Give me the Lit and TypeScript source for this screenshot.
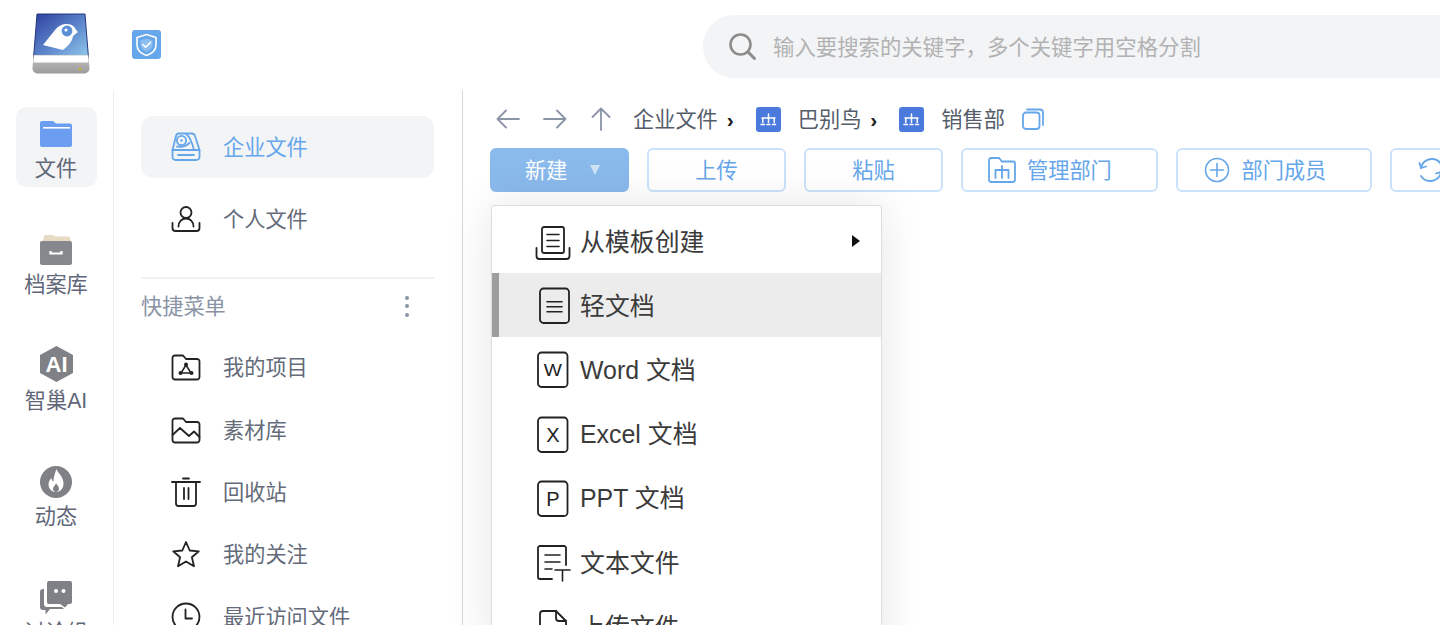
import { LitElement, html, css, svg } from "lit";
import { customElement } from "lit/decorators.js";

const ico = (w: number, h: number, body: unknown, cls = "") =>
  html`<svg class="ico ${cls}" width=${w} height=${h} viewBox="0 0 ${w} ${h}">${body}</svg>`;

const line = `fill:none;stroke:currentColor;stroke-width:1.8;stroke-linecap:round;stroke-linejoin:round`;

const logo = html`<svg class="logo" width="60" height="64" viewBox="0 0 60 64">
  <defs>
    <linearGradient id="lg" x1="0" y1="0" x2="1" y2="1">
      <stop offset="0" stop-color="#2c3f9e" />
      <stop offset="0.55" stop-color="#5f88cd" />
      <stop offset="1" stop-color="#93cdec" />
    </linearGradient>
    <linearGradient id="lb" x1="0" y1="0" x2="0" y2="1">
      <stop offset="0" stop-color="#c4c4c4" />
      <stop offset="1" stop-color="#9b9b9b" />
    </linearGradient>
  </defs>
  <path d="M7 2H55L58.5 46H3.5Z" fill="url(#lg)" stroke="#26367f" stroke-width="1" />
  <path d="M3.5 43H58.5L59.5 56A5 5 0 0 1 54.5 61.5H7.5A5 5 0 0 1 2.5 56Z" fill="url(#lb)" />
  <path d="M4 43.5H58L58.5 50.5H3.5Z" fill="#fff" />
  <circle cx="50" cy="57" r="1.6" fill="#c7b04a" />
  <path d="M13 33L25 18C29 13 33 12 37 12C42 12 45 15 46 18L48 20L43 24C42 30 38 34 33 38Z" fill="#fff" />
  <circle cx="37" cy="19" r="5.4" fill="#5b8fd6" />
  <circle cx="36" cy="18" r="1.6" fill="#fff" />
</svg>`;

const shield = html`<svg class="shield" width="29" height="29" viewBox="0 0 29 29">
  <rect width="29" height="29" rx="3" fill="#66a6ea" />
  <path d="M14.5 4.5L24 7.5V15C24 20 20 23.5 14.5 25.5C9 23.5 5 20 5 15V7.5Z" fill="none" stroke="#fff" stroke-width="1.6" stroke-linejoin="round" />
  <path d="M14.5 8.5L20.5 10.4V15C20.5 18 18 20.3 14.5 21.7C11 20.3 8.5 18 8.5 15V10.4Z" fill="#8cbdf0" />
  <path d="M10.8 14.5L13.6 17.2L18.4 12.4" fill="none" stroke="#fff" stroke-width="1.6" stroke-linecap="round" stroke-linejoin="round" />
</svg>`;

const railIcons = {
  folder: ico(32, 36, svg`
    <path d="M2 7H13L16 9.5H30A2 2 0 0 1 32 11.5V31A2 2 0 0 1 30 33H2A2 2 0 0 1 0 31V9A2 2 0 0 1 2 7Z" fill="#6b9df0" />
    <rect x="3" y="13" width="27" height="1.6" fill="#fff" />`),
  archive: ico(32, 36, svg`
    <path d="M3 10L4 6C4.3 5 5 5 6 5H13L15 6.5H28C29 6.5 29.6 7 29.8 8L31 12H1Z" fill="#e7dcc3" />
    <rect x="0" y="11" width="32" height="24" rx="2" fill="#87888d" />
    <path d="M10.5 21V23.5H21.5V21" fill="none" stroke="#fff" stroke-width="2.2" />`),
  ai: ico(32, 36, svg`
    <path d="M16.5 0L33 9V27L16.5 36L0 27V9Z" fill="#808186" />
    <text x="16.5" y="26" text-anchor="middle" class="ai-t">AI</text>`),
  fire: ico(32, 36, svg`
    <circle cx="16" cy="20" r="16" fill="#808186" />
    <path d="M16.5 7C17.5 11 23.5 14 23.5 21.5C23.5 27 20 30 16 30C12 30 8.5 27 8.5 22.5C8.5 19.5 10 17.5 11.5 16C11.5 18 12.5 19 13.5 19.5C13.5 15 15 11 16.5 7Z" fill="#fff" />
    <path d="M16 21C16.5 23 19 24 19 26.5C19 28.5 17.5 30 16 30C14.5 30 13 28.5 13 26.5C13 24.5 15.5 23.5 16 21Z" fill="#808186" />`),
  chat: ico(32, 36, svg`
    <path d="M9 3H30A2 2 0 0 1 32 5V24A2 2 0 0 1 30 26H28L25 29.5L20 26H9A2 2 0 0 1 7 24V5A2 2 0 0 1 9 3Z" fill="#808186" />
    <path d="M4 11V26A3 3 0 0 0 7 29H22L24 31H10L5.5 36.5V32H3A3 3 0 0 1 0 29V14A3 3 0 0 1 3 11Z" fill="#808186" />
    <circle cx="16" cy="13" r="2" fill="#fff" />
    <circle cx="23.5" cy="13" r="2" fill="#fff" />`),
};

const navIcons = {
  drive: ico(30, 30, svg`<g style=${line}>
    <path d="M7.5 1.5H21Q23.2 1.5 24 4L28.5 18V25A3 3 0 0 1 25.5 28H4.5A3 3 0 0 1 1.5 25V18L5 4Q5.6 1.5 7.5 1.5Z" />
    <path d="M1.5 18H28.5M7 23H23" />
    <circle cx="10.5" cy="8.5" r="4.6" />
    <path d="M15 2C19.5 5 21.5 12 23 18M6 14.5C11 15.5 15.5 14 18.5 11" /></g>
    <circle cx="10.5" cy="8.5" r="1.2" fill="currentColor" />`),
  person: ico(30, 30, svg`<g style=${line}>
    <circle cx="15" cy="8.5" r="5.5" />
    <path d="M7.5 22.5C7.5 17.5 11 14.5 15 14.5C19 14.5 22.5 17.5 22.5 22.5" />
    <path d="M1.5 19V24A3 3 0 0 0 4.5 27H25.5A3 3 0 0 0 28.5 24V19" /></g>`),
  project: ico(30, 30, svg`<g style=${line}>
    <path d="M4 3.5H12L15 7H26A2.5 2.5 0 0 1 28.5 9.5V25A2.5 2.5 0 0 1 26 27.5H4A2.5 2.5 0 0 1 1.5 25V6A2.5 2.5 0 0 1 4 3.5Z" />
    <path d="M15 13L10 21H20Z" style="stroke-width:1.5" /></g>
    <circle cx="15" cy="12.5" r="2" fill="currentColor" />
    <circle cx="9.5" cy="21" r="2" fill="currentColor" />
    <circle cx="20.5" cy="21" r="2" fill="currentColor" />`),
  image: ico(30, 30, svg`<g style=${line}>
    <path d="M4 3.5H12L15 7H26A2.5 2.5 0 0 1 28.5 9.5V25A2.5 2.5 0 0 1 26 27.5H4A2.5 2.5 0 0 1 1.5 25V6A2.5 2.5 0 0 1 4 3.5Z" />
    <path d="M1.5 20L9 13L18 21L23 16.5L28.5 22" /></g>`),
  trash: ico(30, 30, svg`<g style=${line}>
    <path d="M1 5H29M12 1.5H18" />
    <path d="M5 5V26.5A2.5 2.5 0 0 0 7.5 29H22.5A2.5 2.5 0 0 0 25 26.5V5" />
    <path d="M13 11V22M17.5 11V22" /></g>`),
  star: ico(30, 30, svg`<path d="M15 3L18.7 11.5L27.8 12.3L20.9 18.3L23 27.3L15 22.5L7 27.3L9.1 18.3L2.2 12.3L11.3 11.5Z" style=${line} />`),
  clock: ico(30, 30, svg`<g style=${line}>
    <circle cx="15" cy="15" r="13.5" />
    <path d="M14.5 7.5V16.5H21" /></g>`),
};

const menuIcons = {
  template: ico(36, 40, svg`<g style=${line}>
    <rect x="7" y="6" width="22" height="26" rx="2" />
    <path d="M12 13.5H24M12 19.5H24M12 25.5H24" style="stroke-width:1.6" />
    <path d="M1.5 27V35A3 3 0 0 0 4.5 38H31.5A3 3 0 0 0 34.5 35V27" /></g>`),
  lite: ico(36, 40, svg`<g style=${line}>
    <rect x="5" y="3.5" width="29" height="34.5" rx="3.5" />
    <path d="M12 16.7H27M12 21.7H27M12 26.7H27" style="stroke-width:1.6" /></g>`),
  word: ico(36, 40, svg`<rect x="3" y="3.5" width="29.5" height="34.5" rx="3.5" style=${line} />
    <text transform="translate(17.8 27) scale(1.2 1)" text-anchor="middle" class="doc-t w">W</text>`),
  excel: ico(36, 40, svg`<rect x="3" y="3.5" width="29.5" height="34.5" rx="3.5" style=${line} />
    <text x="17.8" y="27.5" text-anchor="middle" class="doc-t">X</text>`),
  ppt: ico(36, 40, svg`<rect x="3" y="3.5" width="29.5" height="34.5" rx="3.5" style=${line} />
    <text x="17.8" y="27.5" text-anchor="middle" class="doc-t">P</text>`),
  text: ico(36, 40, svg`<g style=${line}>
    <path d="M31 23V6A2 2 0 0 0 29 4H5A2 2 0 0 0 3 6V35A2 2 0 0 0 5 37H17" />
    <path d="M10 13H25M10 20H25M10 27H17M20 28H35M27.5 28V39" style="stroke-width:1.6" /></g>`),
  upload: ico(36, 40, svg`<g style=${line}>
    <path d="M5 40V8A3 3 0 0 1 8 5H21L31 15V40" />
    <path d="M21 5V12A3 3 0 0 0 24 15H31" /></g>`),
};

const navArrow = (d: string, cls = "") =>
  ico(24, 24, svg`<path d=${d} style="fill:none;stroke:currentColor;stroke-width:1.8;stroke-linecap:round;stroke-linejoin:round" />`, `arrow ${cls}`);

const orgBadge = html`<svg class="org" width="25" height="25" viewBox="0 0 25 25">
  <rect width="25" height="25" rx="3" fill="#4a7bdc" />
  <path d="M12.5 7V10.5M6 11H19M6.8 11V15.5M12.5 11V15.5M18.2 11V15.5" fill="none" stroke="#fff" stroke-width="1.5" stroke-linecap="round" />
  <path d="M5 17.5H8.5M11 17.5H14M16.5 17.5H19.5" fill="none" stroke="#fff" stroke-width="1.5" stroke-linecap="round" />
</svg>`;

const rail = [
  { icon: railIcons.folder, label: "文件", active: true },
  { icon: railIcons.archive, label: "档案库" },
  { icon: railIcons.ai, label: "智巢AI" },
  { icon: railIcons.fire, label: "动态" },
  { icon: railIcons.chat, label: "讨论组" },
];

const shortcuts = [
  { icon: navIcons.project, label: "我的项目" },
  { icon: navIcons.image, label: "素材库" },
  { icon: navIcons.trash, label: "回收站" },
  { icon: navIcons.star, label: "我的关注" },
  { icon: navIcons.clock, label: "最近访问文件" },
];

const menu = [
  { icon: menuIcons.template, label: "从模板创建", more: true },
  { icon: menuIcons.lite, label: "轻文档", hover: true },
  { icon: menuIcons.word, label: "Word 文档" },
  { icon: menuIcons.excel, label: "Excel 文档" },
  { icon: menuIcons.ppt, label: "PPT 文档" },
  { icon: menuIcons.text, label: "文本文件" },
  { icon: menuIcons.upload, label: "上传文件" },
];

@customElement("app-root")
export class AppRoot extends LitElement {
  static styles = css`
    :host {
      display: flex;
      flex-direction: column;
      width: 1440px;
      height: 625px;
      overflow: hidden;
      background: #fff;
      font-family: "Liberation Sans", "Noto Sans CJK SC", sans-serif;
      font-size: 21.2px;
    }
    .ico {
      display: block;
      flex: none;
      overflow: visible;
    }
    .txt {
      padding-bottom: 3px;
      white-space: nowrap;
    }
    .header {
      display: flex;
      align-items: center;
      flex: none;
      height: 90px;
      padding-left: 30px;
      box-sizing: border-box;
    }
    .logo {
      flex: none;
      margin-bottom: 2px;
    }
    .shield {
      flex: none;
      margin-left: 42px;
      margin-bottom: 1px;
    }
    .search {
      display: flex;
      align-items: center;
      gap: 17px;
      width: 737px;
      height: 63px;
      margin-left: auto;
      margin-top: 3px;
      padding-left: 26px;
      box-sizing: border-box;
      border-radius: 31px 0 0 31px;
      background: #f3f4f6;
      color: #b2b2b2;
      font-size: 21.4px;
    }
    .search .txt {
      padding-bottom: 2px;
    }
    .body {
      display: flex;
      flex: 1;
      min-height: 0;
    }
    .rail {
      display: flex;
      flex-direction: column;
      align-items: center;
      flex: none;
      gap: 36px;
      width: 114px;
      padding: 17px 1px 0 0;
      box-sizing: border-box;
      border-right: 1px solid #eef1f3;
    }
    .rail-item {
      display: flex;
      flex-direction: column;
      align-items: center;
      flex: none;
      width: 81px;
      height: 80px;
      padding-top: 7px;
      box-sizing: border-box;
      border-radius: 10px;
      color: #5f6778;
    }
    .rail-item.active {
      background: #f3f4f6;
    }
    .rail-item span {
      margin-top: 4px;
      line-height: 30px;
      white-space: nowrap;
    }
    .ai-t {
      fill: #fff;
      font: bold 22px "Liberation Sans", sans-serif;
    }
    .side {
      flex: none;
      width: 348px;
      padding: 26px 28px 0 27px;
      box-sizing: border-box;
    }
    .nav {
      display: flex;
      align-items: center;
      gap: 22px;
      height: 62px;
      padding-left: 30px;
      border-radius: 12px;
      color: #222;
    }
    .nav .txt {
      color: #646b7a;
    }
    .nav + .nav {
      margin-top: 10px;
    }
    .nav.active {
      background: #f3f4f6;
      color: #66a6ea;
    }
    .nav.active .txt {
      color: #66a6ea;
    }
    .divider {
      height: 2px;
      margin-top: 27px;
      background: #f0f1f3;
    }
    .side-title {
      display: flex;
      align-items: center;
      justify-content: space-between;
      height: 54px;
      margin-bottom: 3px;
      color: #8a94a6;
    }
    .dots {
      display: flex;
      flex-direction: column;
      gap: 4.5px;
      margin-right: 25px;
    }
    .dots i {
      width: 4px;
      height: 4px;
      border-radius: 50%;
      background: #8a94a6;
    }
    .shortcut {
      display: flex;
      align-items: center;
      gap: 22px;
      height: 62.4px;
      padding-left: 30px;
      color: #222;
    }
    .shortcut .txt {
      color: #646b7a;
    }
    .main {
      flex: 1;
      min-width: 0;
      padding-top: 9px;
      padding-left: 27px;
      border-left: 1px solid #d8d8d8;
    }
    .crumbs {
      display: flex;
      align-items: center;
      height: 40px;
      color: #555d6b;
    }
    .arrow {
      color: #8b94a6;
      margin-right: 23px;
    }
    .arrow.first {
      margin-left: 6px;
    }
    .arrow.fwd {
      margin-right: 22px;
    }
    .arrow.up {
      margin-right: 20px;
    }
    .crumbs b {
      margin: 0 22px 0 9px;
      color: #222;
      font-size: 21px;
      line-height: 1;
    }
    .org {
      flex: none;
      margin-right: 17px;
    }
    .copy {
      margin-left: 17px;
      color: #66a6ea;
    }
    .toolbar {
      position: relative;
      display: flex;
      gap: 18px;
      margin-top: 9px;
    }
    .btn {
      display: flex;
      align-items: center;
      justify-content: center;
      flex: none;
      width: 139px;
      height: 44px;
      box-sizing: border-box;
      border: 2px solid #cbe3fa;
      border-radius: 6px;
      color: #66a6ea;
    }
    .btn.primary {
      justify-content: flex-start;
      padding-left: 35px;
      border: none;
      background: #8ab9ec;
      color: #fff;
    }
    .btn.primary i {
      margin-left: 23px;
      border-left: 5px solid transparent;
      border-right: 5px solid transparent;
      border-top: 10px solid #cfe3f7;
    }
    .btn.wide {
      justify-content: flex-start;
      gap: 11px;
      width: 196.5px;
      padding-left: 25px;
    }
    .btn.refresh {
      justify-content: flex-start;
      width: 100px;
      padding-left: 26px;
    }
    .menu {
      position: absolute;
      top: 57px;
      left: 1px;
      width: 391px;
      padding-top: 3px;
      box-sizing: border-box;
      border: 1px solid #dcdcdc;
      border-radius: 3px;
      background: #fff;
      box-shadow: 0 0 46px rgba(0, 0, 0, 0.1);
      font-size: 24.9px;
    }
    .menu-row {
      display: flex;
      align-items: center;
      gap: 9px;
      height: 64.2px;
      padding-left: 36px;
      box-sizing: border-box;
      border-left: 7px solid transparent;
      color: #222;
    }
    .menu-row .txt {
      color: #3b3b3b;
    }
    .menu-row.hover {
      border-left-color: #9e9e9e;
      background: #ececec;
    }
    .menu-row i {
      margin-left: auto;
      margin-right: 21px;
      border-top: 6px solid transparent;
      border-bottom: 6px solid transparent;
      border-left: 8px solid #111;
    }
    .doc-t {
      fill: #222;
      font: 20px "Liberation Sans", sans-serif;
    }
    .doc-t.w {
      font-size: 16px;
    }
  `;

  render() {
    return html`
      <div class="header">
        ${logo} ${shield}
        <div class="search">
          <svg class="ico" width="27" height="27" viewBox="0 0 27 27" style="color:#8c8c8c">
            <circle cx="11.5" cy="11.5" r="10" fill="none" stroke="currentColor" stroke-width="2.6" />
            <path d="M19 19L25.5 25.5" fill="none" stroke="currentColor" stroke-width="3" stroke-linecap="round" />
          </svg>
          <span class="txt">输入要搜索的关键字，多个关键字用空格分割</span>
        </div>
      </div>
      <div class="body">
        <div class="rail">
          ${rail.map(
            (r) => html`<div class="rail-item ${r.active ? "active" : ""}">
              ${r.icon}<span>${r.label}</span>
            </div>`
          )}
        </div>
        <div class="side">
          <div class="nav active">${navIcons.drive}<span class="txt">企业文件</span></div>
          <div class="nav">${navIcons.person}<span class="txt">个人文件</span></div>
          <div class="divider"></div>
          <div class="side-title">
            <span class="txt">快捷菜单</span>
            <div class="dots"><i></i><i></i><i></i></div>
          </div>
          ${shortcuts.map((s) => html`<div class="shortcut">${s.icon}<span class="txt">${s.label}</span></div>`)}
        </div>
        <div class="main">
          <div class="crumbs">
            ${navArrow("M23 12H1.5M10 3.5L1.5 12L10 20.5", "first")}
            ${navArrow("M1 12H22.5M14 3.5L22.5 12L14 20.5", "fwd")}
            ${navArrow("M12 23V1.5M3.5 10L12 1.5L20.5 10", "up")}
            <span class="txt">企业文件</span><b>›</b>${orgBadge}<span class="txt">巴别鸟</span><b>›</b>${orgBadge}<span class="txt">销售部</span>
            <svg class="ico copy" width="22" height="22" viewBox="0 0 22 22">
              <rect x="1" y="4.5" width="16.5" height="16.5" rx="3" fill="none" stroke="currentColor" stroke-width="1.8" />
              <path d="M5 1.5H18A3 3 0 0 1 21 4.5V17" fill="none" stroke="currentColor" stroke-width="1.8" stroke-linecap="round" />
            </svg>
          </div>
          <div class="toolbar">
            <div class="btn primary"><span class="txt">新建</span><i></i></div>
            <div class="btn"><span class="txt">上传</span></div>
            <div class="btn"><span class="txt">粘贴</span></div>
            <div class="btn wide">
              <svg class="ico" width="28" height="26" viewBox="0 0 28 26">
                <path d="M3 1H11L14 4.5H25A2 2 0 0 1 27 6.5V22.5A2.5 2.5 0 0 1 24.5 25H3.5A2.5 2.5 0 0 1 1 22.5V3A2 2 0 0 1 3 1Z" fill="none" stroke="currentColor" stroke-width="1.8" />
                <path d="M14 9V13M7.5 21V13H20.5V21M14 13V21" fill="none" stroke="currentColor" stroke-width="1.8" stroke-linecap="round" />
              </svg>
              <span class="txt">管理部门</span>
            </div>
            <div class="btn wide">
              <svg class="ico" width="28" height="26" viewBox="0 0 28 26">
                <circle cx="14" cy="13" r="11.5" fill="none" stroke="currentColor" stroke-width="1.6" />
                <path d="M14 6.5V19.5M7.5 13H20.5" fill="none" stroke="currentColor" stroke-width="1.6" stroke-linecap="round" />
              </svg>
              <span class="txt">部门成员</span>
            </div>
            <div class="btn refresh">
              <svg class="ico" width="26" height="26" viewBox="0 0 26 26">
                <path d="M3 11A11 11 0 0 1 23 7M23 15A11 11 0 0 1 3 19" fill="none" stroke="currentColor" stroke-width="1.8" stroke-linecap="round" />
                <path d="M1.5 6L3 11L8 9.5M24.5 20L23 15L18 16.5" fill="none" stroke="currentColor" stroke-width="1.8" stroke-linecap="round" stroke-linejoin="round" />
              </svg>
            </div>
            <div class="menu">
              ${menu.map(
                (m) => html`<div class="menu-row ${m.hover ? "hover" : ""}">
                  ${m.icon}<span class="txt">${m.label}</span>${m.more ? html`<i></i>` : ""}
                </div>`
              )}
            </div>
          </div>
        </div>
      </div>
    `;
  }
}
